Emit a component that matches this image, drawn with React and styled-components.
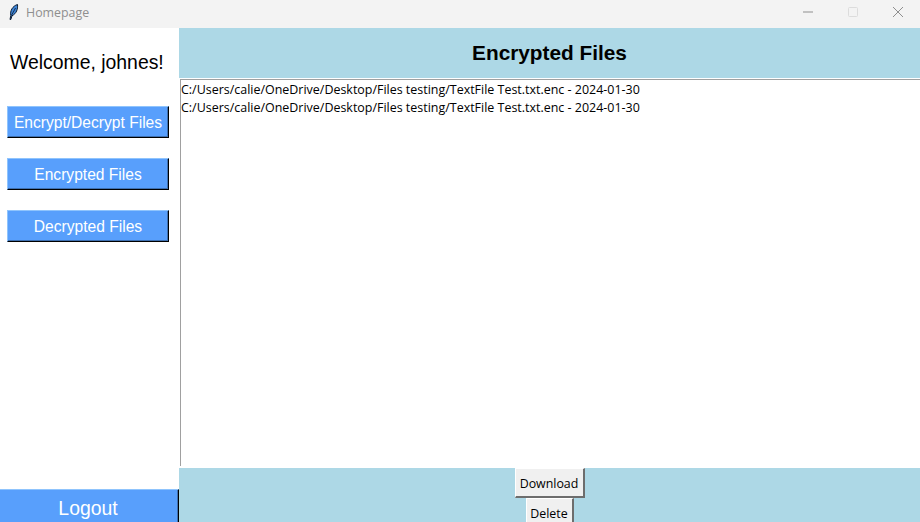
import styled, { createGlobalStyle } from "styled-components";

const GlobalStyle = createGlobalStyle`
    html, body, #root {
        margin: 0;
        height: 100%;
    }
    body {
        overflow: hidden;
        background: #fff;
    }
`;

const Window = styled.div`
    width: 920px;
    height: 522px;
    display: flex;
    flex-direction: column;
    overflow: hidden;
`;

const TitleBar = styled.div`
    box-sizing: border-box;
    height: 28px;
    flex-shrink: 0;
    display: flex;
    align-items: center;
    background: #f3f3f3;
    padding: 0 0 4px 8px;
`;

const TitleText = styled.span`
    margin-left: 6px;
    font: 12.4px "Open Sans", "Noto Sans", sans-serif;
    color: #8f8f8f;
`;

const WindowControls = styled.div`
    margin-left: auto;
    display: flex;
    align-items: center;
`;

const WindowControl = styled.div`
    width: 45px;
    height: 24px;
    display: flex;
    align-items: center;
    justify-content: center;
`;

const Body = styled.div`
    flex: 1;
    display: flex;
    min-height: 0;
`;

const Sidebar = styled.div`
    width: 179px;
    flex-shrink: 0;
    display: flex;
    flex-direction: column;
    background: #fff;
`;

const Welcome = styled.div`
    height: 20px;
    margin: 24px 0 34px;
    padding-left: 10px;
    font: 19.4px/20px "Liberation Sans", Arial, sans-serif;
    color: #000;
    white-space: nowrap;
`;

const NavList = styled.div`
    display: flex;
    flex-direction: column;
    gap: 20px;
    padding-left: 7px;
`;

const RaisedButton = styled.button`
    box-sizing: border-box;
    padding: 0;
    background: #589ffc;
    color: #fff;
    font-family: "Liberation Sans", Arial, sans-serif;
    border-style: solid;
    border-width: 1px;
    border-color: #8fc4fd #000 #000 #8fc4fd;
    box-shadow: inset -1px -1px 0 #3e70b0;
    white-space: nowrap;
`;

const NavButton = styled(RaisedButton)`
    width: 162px;
    height: 32px;
    padding-top: 1px;
    font-size: 15.6px;
`;

const LogoutButton = styled(RaisedButton)`
    margin-top: auto;
    width: 179px;
    height: 33px;
    padding: 5px 2px 0 0;
    font-size: 19.4px;
    border-width: 1px 1px 0 0;
    box-shadow: inset -1px 0 0 #3e70b0;
`;

const Main = styled.div`
    flex: 1;
    min-width: 0;
    display: flex;
    flex-direction: column;
`;

const Header = styled.div`
    height: 50px;
    flex-shrink: 0;
    display: flex;
    align-items: center;
    justify-content: center;
    background: #add8e6;
    font: bold 20.8px "Liberation Sans", Arial, sans-serif;
    color: #000;
`;

const FileList = styled.div`
    box-sizing: border-box;
    height: 387px;
    flex-shrink: 0;
    margin: 1px 0 2px 1px;
    padding: 1px 0 0 0;
    background: #fff;
    border-style: solid;
    border-width: 1px 0 0 1px;
    border-color: #a0a0a0;
    font: 12.46px/18px "Open Sans", "Noto Sans", sans-serif;
    color: #000;
`;

const FileRow = styled.div`
    white-space: nowrap;
`;

const Footer = styled.div`
    flex: 1;
    min-height: 0;
    overflow: hidden;
    display: flex;
    flex-direction: column;
    align-items: center;
    background: #add8e6;
`;

const ActionButton = styled.button`
    box-sizing: border-box;
    flex-shrink: 0;
    height: 30px;
    padding: 2px 0 0;
    background: #f0f0f0;
    color: #000;
    font: 12.4px "Open Sans", "Noto Sans", sans-serif;
    border-style: solid;
    border-width: 1px 2px 2px 1px;
    border-color: #fff #6d6d6d #6d6d6d #fff;
    width: ${(props) => props.$width}px;
`;

const Feather = () => (
    <svg width="12" height="18" viewBox="0 0 12 18">
        <path d="M2 16.5 L2.8 12.5 C1.8 8 4.5 3 9.5 1.5 C10 6 8.5 10.5 4 12.8 L2.8 16.5 Z" fill="#3f86d8" stroke="#0a1a30" strokeWidth="1" />
        <path d="M3.4 12.5 L7.5 5" stroke="#0a1a30" strokeWidth="0.8" fill="none" />
    </svg>
);

const files = [
    "C:/Users/calie/OneDrive/Desktop/Files testing/TextFile Test.txt.enc - 2024-01-30",
    "C:/Users/calie/OneDrive/Desktop/Files testing/TextFile Test.txt.enc - 2024-01-30"
];

export default function App() {
    return (
        <Window>
            <GlobalStyle />
            <TitleBar>
                <Feather />
                <TitleText>Homepage</TitleText>
                <WindowControls>
                    <WindowControl>
                        <svg width="12" height="2" viewBox="0 0 12 2">
                            <path d="M1 1 H11" stroke="#8f8f8f" strokeWidth="1" />
                        </svg>
                    </WindowControl>
                    <WindowControl>
                        <svg width="12" height="12" viewBox="0 0 12 12">
                            <rect x="1.5" y="1.5" width="9" height="9" rx="1" fill="none" stroke="#dcdcdc" strokeWidth="1" />
                        </svg>
                    </WindowControl>
                    <WindowControl>
                        <svg width="12" height="12" viewBox="0 0 12 12">
                            <path d="M1 1 L11 11 M11 1 L1 11" stroke="#8f8f8f" strokeWidth="1" />
                        </svg>
                    </WindowControl>
                </WindowControls>
            </TitleBar>
            <Body>
                <Sidebar>
                    <Welcome>Welcome, johnes!</Welcome>
                    <NavList>
                        <NavButton>Encrypt/Decrypt Files</NavButton>
                        <NavButton>Encrypted Files</NavButton>
                        <NavButton>Decrypted Files</NavButton>
                    </NavList>
                    <LogoutButton>Logout</LogoutButton>
                </Sidebar>
                <Main>
                    <Header>Encrypted Files</Header>
                    <FileList>
                        {files.map((f, i) => (
                            <FileRow key={i}>{f}</FileRow>
                        ))}
                    </FileList>
                    <Footer>
                        <ActionButton $width={70}>Download</ActionButton>
                        <ActionButton $width={48}>Delete</ActionButton>
                    </Footer>
                </Main>
            </Body>
        </Window>
    );
}
